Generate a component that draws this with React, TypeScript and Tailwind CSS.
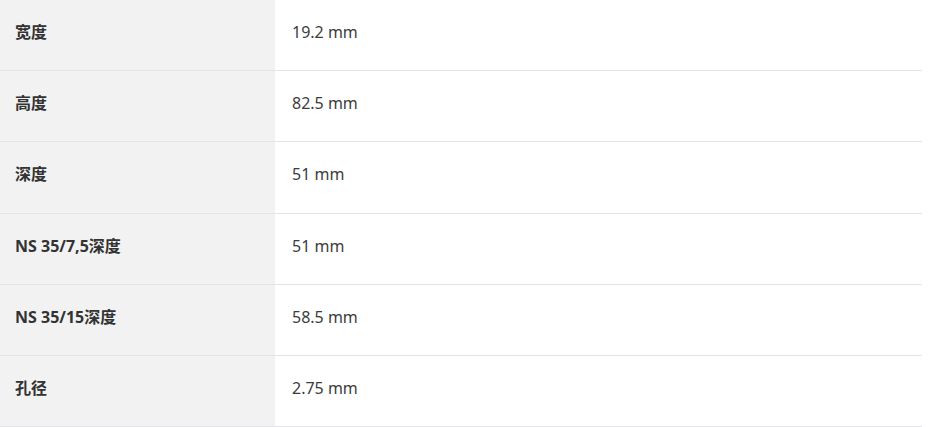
import React from 'react';

const rows: [string, string][] = [
  ['宽度', '19.2 mm'],
  ['高度', '82.5 mm'],
  ['深度', '51 mm'],
  ['NS 35/7,5深度', '51 mm'],
  ['NS 35/15深度', '58.5 mm'],
  ['孔径', '2.75 mm'],
];

const App: React.FC = () => {
  return (
    <div className="w-[929px] bg-white" style={{ fontFamily: '"Noto Sans", "Noto Sans CJK SC", sans-serif' }}>
      <div className="w-[922px] flex flex-col">
        {rows.map(([label, value], i) => (
          <div key={i} className="flex h-[71.2px] border-b border-[#e3e3e8]">
            <div className="w-[275px] bg-[#f2f2f2] pl-[15px] pb-[6px] flex items-center text-[16px] font-bold text-[#333333]">
              {label}
            </div>
            <div className="flex-1 pl-[17px] pb-[6px] flex items-center text-[16px] text-[#3c3c3c]">{value}</div>
          </div>
        ))}
      </div>
    </div>
  );
};

export default App;
